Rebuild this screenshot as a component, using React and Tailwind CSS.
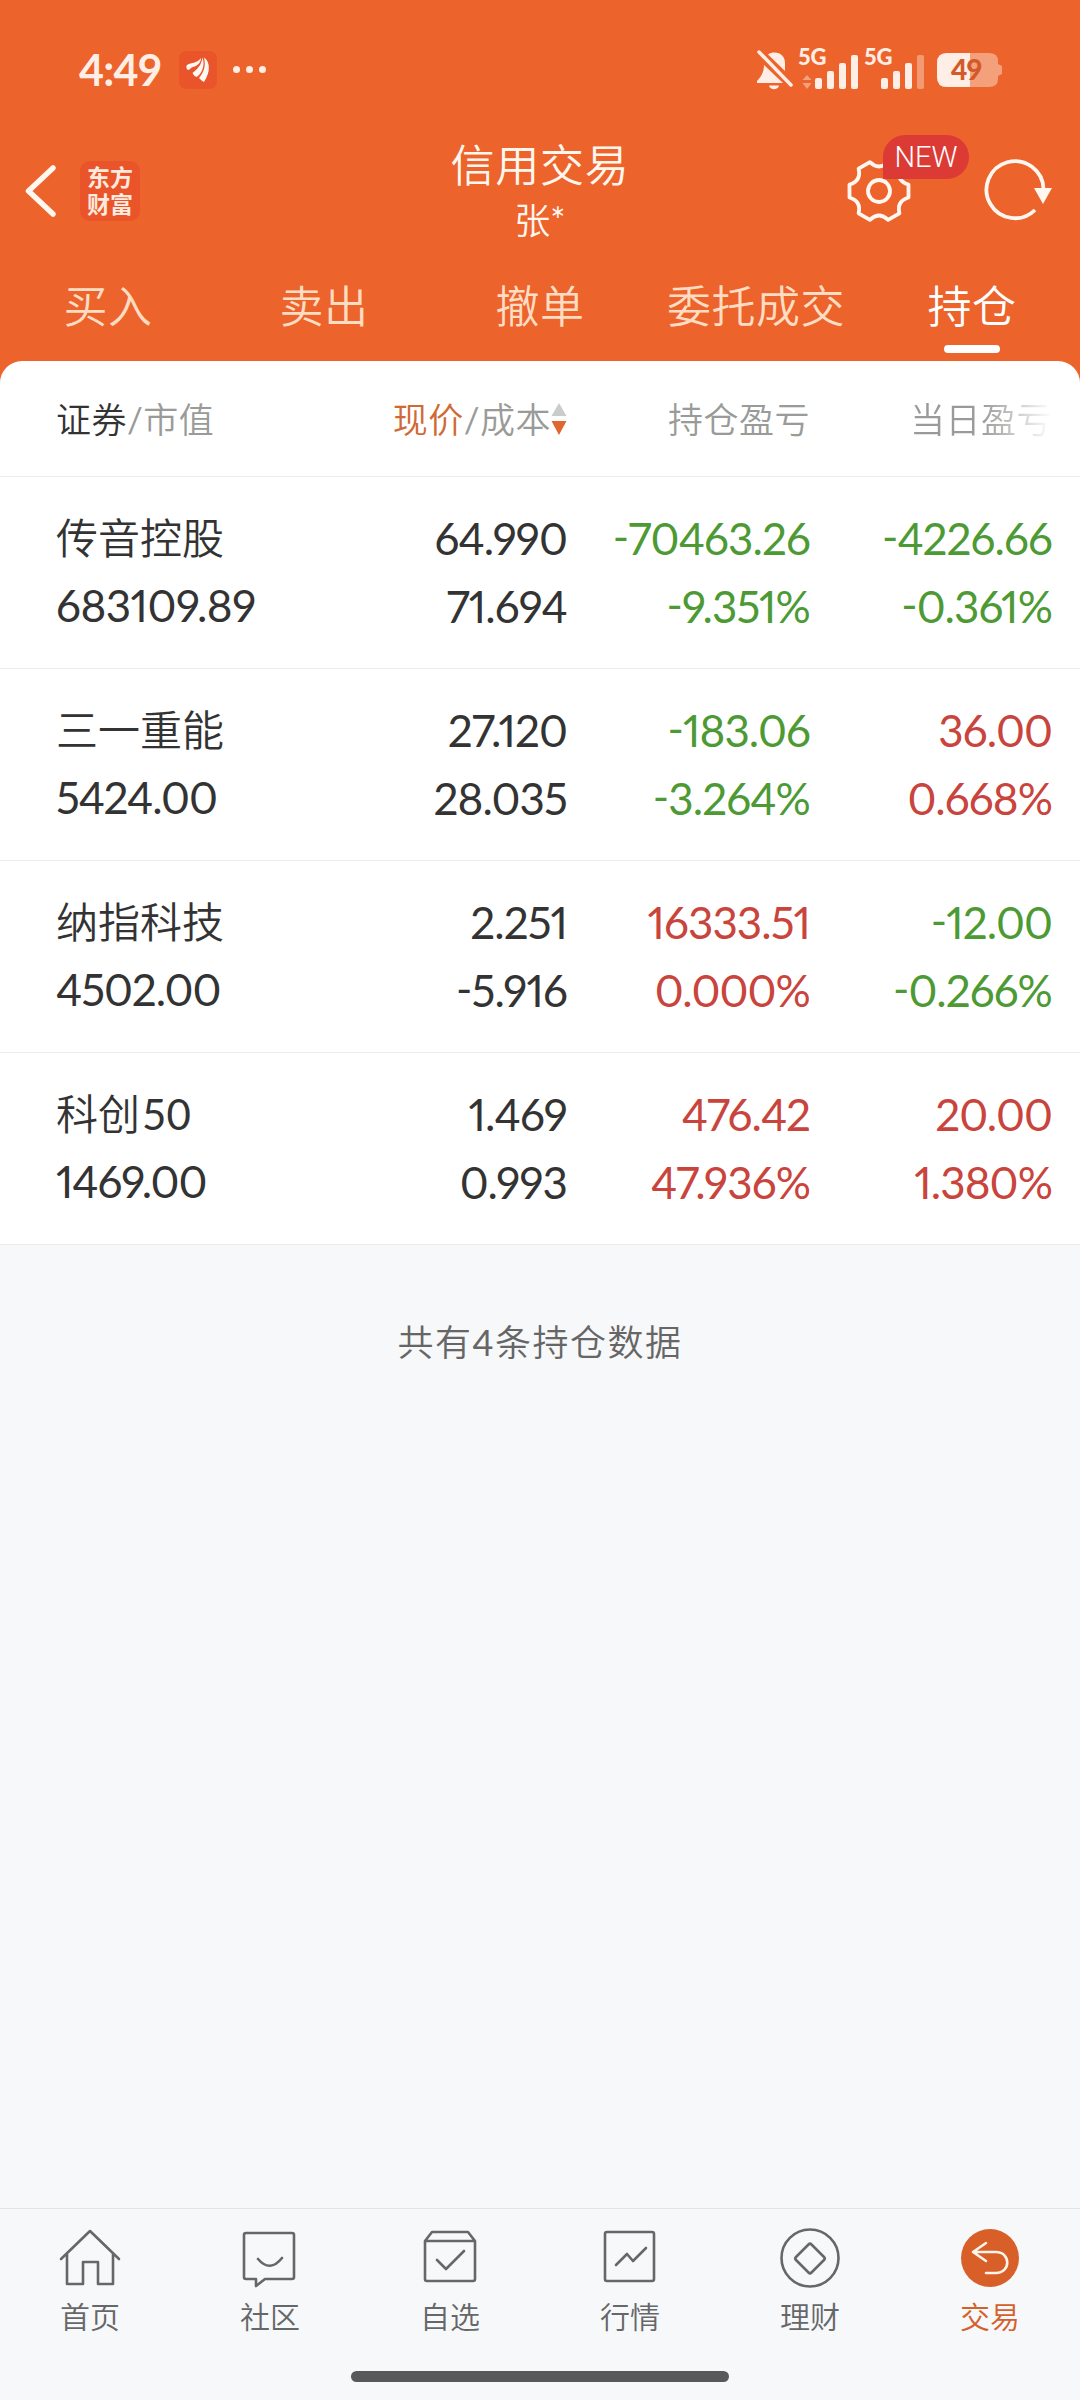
import React from 'react'
import clsx from 'clsx'

const tabs = ['买入', '卖出', '撤单', '委托成交', '持仓']

const holdings = [
  { name: '传音控股', value: '683109.89', price: '64.990', cost: '71.694', pnl: '-70463.26', pnlPct: '-9.351%', day: '-4226.66', dayPct: '-0.361%', up: false, dayUp: false },
  { name: '三一重能', value: '5424.00',   price: '27.120', cost: '28.035', pnl: '-183.06',   pnlPct: '-3.264%', day: '36.00',    dayPct: '0.668%',  up: false, dayUp: true },
  { name: '纳指科技', value: '4502.00',   price: '2.251',  cost: '-5.916', pnl: '16333.51',  pnlPct: '0.000%',  day: '-12.00',   dayPct: '-0.266%', up: true,  dayUp: false },
  { name: '科创', code: '50', value: '1469.00', price: '1.469', cost: '0.993', pnl: '476.42', pnlPct: '47.936%', day: '20.00',    dayPct: '1.380%',  up: true,  dayUp: true },
]

function Signal({ dim, arrows }) {
  return (
    <svg className="overflow-visible" width="60" height="40" viewBox="0 0 60 40" fill="#ffeee5">
      <text x="-1" y="16" fontSize="22" fontWeight="900" fontFamily="Lato" letterSpacing="-0.3">5G</text>
      {arrows && <path d="M3.5 31l4.5-5 4.500 5zM3.500 34h9l-4.500 6z" opacity="0.45" />}
      <rect x="16" y="29" width="7" height="11" rx="2" />
      <rect x="28" y="22" width="7" height="18" rx="2" />
      <rect x="40" y="14" width="7" height="26" rx="2" />
      <rect x="52" y="6" width="7" height="34" rx="2" opacity={dim ? 0.4 : 1} />
    </svg>
  )
}

function StatusBar() {
  return (
    <div className="flex h-[139px] items-center pl-[79px] pr-[77px]">
      <span className="w-[100px] font-['Lato'] text-[43px] font-bold leading-none tracking-[-0.8px] text-[#ffeee5]">4:49</span>
      <span className="flex size-[38px] items-center justify-center rounded-lg bg-[#e9542a]">
        <svg width="38" height="38" viewBox="0 0 38 38" fill="#fff8f2">
          <path d="M8 14c5-3 9-1 14-7 0 5-4 8-8 9-2 0-3 3-5 3-2-1-2-4-1-5z" />
          <path d="M13.500 22c5-4 9-8 10-15.500 3 8-1 17-6 19.500-2-1-3-2-4-4z" />
          <path d="M20 27c5-6 7-12 5-20.500 6 4 7 14 0 24.500-2-1-3-2-5-4z" />
        </svg>
      </span>
      <span className="ml-4 flex gap-[6px]">
        {[0, 1, 2].map(i => <i key={i} className="size-[7px] rounded-full bg-[#ffeee5]" />)}
      </span>
      <div className="ml-auto flex items-center">
        <svg className="mr-[6px]" width="36" height="40" viewBox="0 0 36 40" fill="#ffeee5">
          <path d="M11 4.500C13 3 15 2.500 17.500 2.500 24 2.500 28 7 28 13v8zM7 15l19 18H0v-2c4-4 7-9 7-16zM12 35.500h10c-1 5-9 5-10 0z" />
          <path d="M2 2l32 33" stroke="#ffeee5" strokeWidth="3.500" strokeLinecap="round" />
        </svg>
        <div className="mr-[6px] -mt-[2px]"><Signal arrows /></div>
        <div className="mr-[12px] -mt-[2px]"><Signal dim /></div>
        <svg className="overflow-visible" width="66" height="34" viewBox="0 0 66 34">
          <path d="M10 0h42q9 0 9 8v3l4 2v8l-4 2v3q0 8-9 8H10Q0 34 0 24V10Q0 0 10 0z" fill="#f4a07a" />
          <path d="M10 0h23v34H10Q0 34 0 24V10Q0 0 10 0z" fill="#ffeee5" />
          <text x="14" y="27" fontSize="28" fontWeight="900" fontFamily="Lato" letterSpacing="-1" fill="#d25a2a">49</text>
        </svg>
      </div>
    </div>
  )
}

function TitleBar() {
  return (
    <div className="grid h-[111px] grid-cols-3 text-white">
      <div className="flex h-[104px] items-center pl-6">
        <svg width="34" height="54" viewBox="0 0 34 54" fill="none" stroke="#fff7f0" strokeWidth="5.500" strokeLinecap="round" strokeLinejoin="round">
          <path d="M29 4L4.500 27l24.500 23" />
        </svg>
        <div className="ml-[22px] flex size-[60px] items-center justify-center rounded-[10px] bg-[#e9542a]">
          <span className="w-[46px] break-all text-[23px] font-bold leading-[27px] text-[#ffeadd]">东方财富</span>
        </div>
      </div>
      <div className="flex flex-col items-center text-[#fff7ee]">
        <h1 className="text-[44px] leading-[52px] tracking-[0.8px]">信用交易</h1>
        <span className="mt-[3px] text-[36px] leading-[52px]">张<span className="font-normal">*</span></span>
      </div>
      <div className="flex h-[104px] items-center justify-end pr-[26px]">
        <div className="relative mr-[73px]">
          <svg width="64" height="64" viewBox="0 0 64 64" fill="none" stroke="#fff7f0" strokeWidth="3.800" strokeLinejoin="round">
            <path d="M22.900 3.200Q32 11.800 41.100 3.200L52.400 9.700Q49.500 21.900 61.500 25.500V38.500Q49.500 42.100 52.400 54.300L41.100 60.800Q32 52.200 22.900 60.800L11.600 54.300Q14.500 42.100 2.500 38.500V25.500Q14.500 21.900 11.600 9.700z" />
            <circle cx="32" cy="32" r="11" />
          </svg>
          <span className="absolute -top-[24px] left-[36px] flex h-[44px] w-[86px] items-center justify-center rounded-[22px] rounded-bl-none bg-[#dc3a35] pt-px font-['Roboto'] text-[29px] font-light">NEW</span>
        </div>
        <svg width="70" height="64" viewBox="0 0 70 64" fill="none">
          <path d="M59.500 30A28.500 28.500 0 1 0 51 51" stroke="#fff7f0" strokeWidth="3.800" />
          <path d="M50 29h18l-9 16z" fill="#fff7f0" />
        </svg>
      </div>
    </div>
  )
}

// proportional digits with the minus raised to cap height
const figures = "font-['Lato'] font-normal text-[44px] [font-feature-settings:'pnum','case']"

function Cell({ top, bottom, tone }) {
  return (
    <div className={clsx('-mt-px flex flex-col text-right leading-[68px] tracking-[-0.9px]', figures, tone)}>
      <span>{top}</span>
      <span>{bottom}</span>
    </div>
  )
}

const tone = up => (up ? 'text-[#c8443c]' : 'text-[#4d9a35]')

const columns = 'grid grid-cols-[324px_243px_243px_242px]'

const navItems = [
  { label: '首页', icon: <path d="M3 32L32 4l29 28M9 27v30h16V35h15v22h15V27" /> },
  { label: '社区', icon: <path d="M8 6h46q2 0 2 2v42q0 2-2 2H27l-9 7v-7H8q-2 0-2-2V8q0-2 2-2zM20 32q12 14 24-1" /> },
  { label: '自选', icon: <path d="M7 14L14 5h36l7 9v38q0 2-2 2H9q-2 0-2-2zM7 14h50M19 33l9 9 18-18" /> },
  { label: '行情', icon: <path d="M9 5h45q2 0 2 2v45q0 2-2 2H9q-2 0-2-2V7q0-2 2-2zM18 38l11-11 6 7 13-13" /> },
  { label: '理财', icon: <><circle cx="32" cy="31" r="28.500" /><path d="M30.500 17.500q1.500-1.500 3 0L46 30q1.500 1.500 0 3L33.500 45.500q-1.500 1.500-3 0L18 33q-1.500-1.500 0-3z" /></> },
  { label: '交易', active: true, icon: <><circle cx="32" cy="31" r="29" fill="#d95f28" stroke="none" /><path d="M28 16L15 25l13 9M16 25h22c15 0 15 21 0 21H28" stroke="#fff4ea" /></> },
]

export default function App() {
  return (
    <div className="flex h-[2400px] w-[1080px] flex-col bg-[#f7f8fa] font-['Lato','Noto_Sans_CJK_SC',sans-serif] font-[350]">
      <header className="h-[385px] bg-[#ec632b]">
        <StatusBar />
        <TitleBar />
        <nav className="grid h-[111px] grid-cols-5">
          {tabs.map(t => (
            <div key={t} className={clsx('flex flex-col items-center pt-[23px] text-[44px] leading-[66px] tracking-[0.5px]', t === '持仓' ? 'text-white' : 'text-[#ffdcc2]')}>
              {t}
              {t === '持仓' && <span className="mt-[6px] h-2 w-14 rounded-full bg-white" />}
            </div>
          ))}
        </nav>
      </header>

      <section className="-mt-6 rounded-t-[22px] bg-white">
        <div className={clsx(columns, 'h-[116px] items-center border-b border-[#ebebeb] pt-px text-right text-[35px] tracking-[0.5px] text-[#999b98]')}>
          <div className="pl-[56px] text-left"><span className="text-[#333]">证券</span><span className="font-normal">/</span>市值</div>
          <div className="flex items-center justify-end">
            <span><span className="text-[#cf6a35]">现价</span><span className="font-normal">/</span>成本</span>
            <svg width="16" height="34" viewBox="0 0 16 34">
              <path d="M8 1l7.500 13H.5z" fill="#c9cdca" />
              <path d="M.5 19h15L8 33z" fill="#e0652f" />
            </svg>
          </div>
          <div>持仓盈亏</div>
          <div><span className="bg-linear-to-r from-[#999b98] from-50% to-white bg-clip-text text-transparent">当日盈亏</span></div>
        </div>

        {holdings.map(h => (
          <div key={h.name} className={clsx(columns, 'h-[192px] items-start border-b border-[#ebebeb] pt-[28px] text-[#333]')}>
            <div className="flex flex-col pl-[56px]">
              <span className="text-[42px] leading-[67px]">{h.name}{h.code && <span className="pl-[2px] font-normal">{h.code}</span>}</span>
              <span className={clsx('-mt-px leading-[68px]', figures, h.value.length > 8 ? 'tracking-[-0.5px]' : 'tracking-[-1.1px]')}>{h.value}</span>
            </div>
            <Cell top={h.price} bottom={h.cost} />
            <Cell top={h.pnl} bottom={h.pnlPct} tone={tone(h.up)} />
            <Cell top={h.day} bottom={h.dayPct} tone={tone(h.dayUp)} />
          </div>
        ))}
      </section>

      <p className="mt-[72px] text-center text-[36px] leading-[50px] tracking-[1.5px] text-[#666]">共有<span className="font-normal">4</span>条持仓数据</p>

      <footer className="mt-auto h-[192px] border-t border-[#e2e3e5]">
        <div className="grid grid-cols-6 pt-[18px]">
          {navItems.map(n => (
            <div key={n.label} className={clsx('flex flex-col items-center text-[30px] leading-[44px]', n.active ? 'text-[#d4602c]' : 'text-[#666769]')}>
              <svg width="64" height="64" viewBox="0 0 64 64" fill="none" stroke="#666769" strokeWidth="2.600" strokeLinecap="round" strokeLinejoin="round">
                {n.icon}
              </svg>
              <span className="mt-[3px]">{n.label}</span>
            </div>
          ))}
        </div>
        <div className="mx-auto mt-[33px] h-[11px] w-[378px] rounded-full bg-[#58595b]" />
      </footer>
    </div>
  )
}
